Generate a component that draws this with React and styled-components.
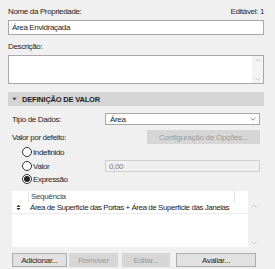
import React from 'react'
import styled, { createGlobalStyle } from 'styled-components'

const Global = createGlobalStyle`
  html, body {
    margin: 0;
    padding: 0;
    background: #f0f0f0;
  }
  body {
    font-family: "Liberation Sans", Arial, sans-serif;
    font-size: 8px;
    letter-spacing: -0.35px;
    color: #1e1e1e;
  }
`

const Panel = styled.div`
  width: 275px;
  height: 269px;
  box-sizing: border-box;
  padding: 6px 11px 0 8px;
  display: flex;
  flex-direction: column;
  overflow: hidden;
`

const TopRow = styled.div`
  display: flex;
  justify-content: space-between;
  align-items: flex-end;
  height: 12px;
  line-height: 12px;
`

const Label = styled.div`
  height: 12px;
  line-height: 12px;
  margin-top: ${(p) => p.top || 0}px;
`

const Editable = styled.div`
  color: #2e2430;
  margin-top: -4px;
`

const TextBox = styled.div`
  box-sizing: border-box;
  height: ${(p) => p.h}px;
  margin-top: ${(p) => p.top || 0}px;
  background: #fff;
  border: 1px solid #a8a8a8;
  padding-left: 3px;
  line-height: ${(p) => p.h - 2}px;
  display: flex;
  justify-content: space-between;
`

const ScrollBar = styled.div`
  width: 11px;
  background: #f3f3f3;
  display: flex;
  flex-direction: column;
  justify-content: space-between;
  align-items: center;
  padding: 2px 0;
  box-sizing: border-box;
`

const Header = styled.div`
  margin-top: 8px;
  height: 14px;
  background: #d5d5d5;
  display: flex;
  align-items: center;
  gap: 5px;
  padding-left: 4px;
  font-weight: bold;
  font-size: 7.5px;
  letter-spacing: -0.2px;
`

const Body = styled.div`
  padding: 0 4px;
  display: flex;
  flex-direction: column;
`

const FieldRow = styled.div`
  display: grid;
  grid-template-columns: ${(p) => p.split || 93}px 1fr;
  align-items: center;
  height: ${(p) => p.h}px;
  margin-top: ${(p) => p.top || 0}px;
`

const Select = styled.div`
  box-sizing: border-box;
  height: 100%;
  background: #fff;
  border: 1px solid #a8a8a8;
  display: flex;
  align-items: center;
  justify-content: space-between;
  padding: 0 3px 0 4px;
`

const DisabledInput = styled.div`
  box-sizing: border-box;
  height: 100%;
  background: #f0f0f0;
  border: 1px solid #d0d0d0;
  color: #7a7a7a;
  display: flex;
  align-items: center;
  padding-left: 3px;
`

const Button = styled.div`
  box-sizing: border-box;
  height: 100%;
  display: flex;
  align-items: center;
  justify-content: center;
  background: ${(p) => (p.disabled ? '#d6d6d6' : '#e1e1e1')};
  border: 1px solid ${(p) => (p.disabled ? '#d6d6d6' : '#adadad')};
  color: ${(p) => (p.disabled ? '#9c9c9c' : '#1e1e1e')};
  letter-spacing: -0.25px;
`

const RadioRow = styled.div`
  display: flex;
  align-items: center;
  gap: 1px;
  padding-left: 10px;
  height: ${(p) => p.h || 15}px;
  margin-top: ${(p) => p.top || 0}px;
`

const Radio = styled.span`
  box-sizing: border-box;
  width: 10px;
  height: 10px;
  border-radius: 50%;
  border: 1px solid #333;
  background: #fff;
  display: flex;
  align-items: center;
  justify-content: center;
  &::after {
    content: '';
    width: 6px;
    height: 6px;
    border-radius: 50%;
    background: ${(p) => (p.checked ? '#222' : 'transparent')};
  }
`

const Table = styled.div`
  margin-top: 5px;
  height: 56px;
  display: grid;
  grid-template-columns: 236px 12px;
`

const TableMain = styled.div`
  background: #fff;
  display: flex;
  flex-direction: column;
`

const HeadRow = styled.div`
  height: 11px;
  display: grid;
  grid-template-columns: 16px 206px 1fr;
  line-height: 11px;
  color: #2a4a6a;
  & > div + div {
    border-left: 1px solid #e3e3e3;
    padding-left: 2px;
  }
`

const DataRow = styled.div`
  height: 11px;
  border-bottom: 1px solid #ececec;
  display: grid;
  grid-template-columns: 18px 1fr;
  align-items: center;
  letter-spacing: -0.45px;
`

const TableScroll = styled(ScrollBar)`
  margin-top: 11px;
  background: #f0f0f0;
`

const ButtonBar = styled.div`
  margin-top: 6px;
  height: 14px;
  display: grid;
  grid-template-columns: 55px 49px 50px 84px;
  column-gap: 2px;
  & > div:nth-child(3) { margin-left: 2px; }
  & > div:nth-child(4) { margin-left: 4px; }
`

const Chevron = ({ up, color = '#b0b0b0', w = 6 }) => (
  <svg width={w} height="4" viewBox="0 0 6 4">
    <path d={up ? 'M0.5 3.5 L3 1 L5.5 3.5' : 'M0.5 0.8 L3 3.2 L5.5 0.8'} fill="none" stroke={color} strokeWidth="0.9" />
  </svg>
)

const Caret = () => (
  <svg width="5" height="4" viewBox="0 0 5 4">
    <path d="M0.3 0.8 H4.7 L2.5 3.4 Z" fill="#444" />
  </svg>
)

const SortHandle = () => (
  <svg width="5" height="7" viewBox="0 0 5 7">
    <path d="M0.5 3 L2.5 0.8 L4.5 3 Z M0.5 4 L2.5 6.2 L4.5 4 Z" fill="#333" />
  </svg>
)

export default function App() {
  return (
    <>
      <Global />
      <Panel>
        <TopRow>
          <Label>Nome da Propriedade:</Label>
          <Editable>Editável: 1</Editable>
        </TopRow>
        <TextBox h={15} top={2}>
          Área Envidraçada
        </TextBox>
        <Label top={6}>Descrição:</Label>
        <TextBox h={29} top={2}>
          <span />
          <ScrollBar>
            <Chevron up color="#c4c4c4" />
            <Chevron color="#c4c4c4" />
          </ScrollBar>
        </TextBox>
        <Header>
          <Caret />
          DEFINIÇÃO DE VALOR
        </Header>
        <Body>
          <FieldRow h={12} top={7}>
            <span>Tipo de Dados:</span>
            <Select>
              <span>Área</span>
              <Chevron color="#777" />
            </Select>
          </FieldRow>
          <FieldRow h={14} top={5} split={135}>
            <span>Valor por defeito:</span>
            <Button disabled>Configuração de Opções...</Button>
          </FieldRow>
          <RadioRow h={14} top={1}>
            <Radio />
            <span>Indefinido</span>
          </RadioRow>
          <FieldRow h={12} top={1}>
            <RadioRow h={12}>
              <Radio />
              <span>Valor</span>
            </RadioRow>
            <DisabledInput>0,00</DisabledInput>
          </FieldRow>
          <RadioRow h={14} top={0}>
            <Radio checked />
            <span>Expressão</span>
          </RadioRow>
          <Table>
            <TableMain>
              <HeadRow>
                <div />
                <div>Sequência</div>
                <div />
              </HeadRow>
              <DataRow>
                <span style={{ paddingLeft: 4, display: 'flex' }}>
                  <SortHandle />
                </span>
                <span>Área de Superfície das Portas + Área de Superfície das Janelas</span>
              </DataRow>
            </TableMain>
            <TableScroll>
              <Chevron up color="#c8c8c8" />
              <Chevron color="#c8c8c8" />
            </TableScroll>
          </Table>
          <ButtonBar>
            <Button>Adicionar...</Button>
            <Button disabled>Remover</Button>
            <Button disabled>Editar...</Button>
            <Button>Avaliar...</Button>
          </ButtonBar>
        </Body>
      </Panel>
    </>
  )
}
